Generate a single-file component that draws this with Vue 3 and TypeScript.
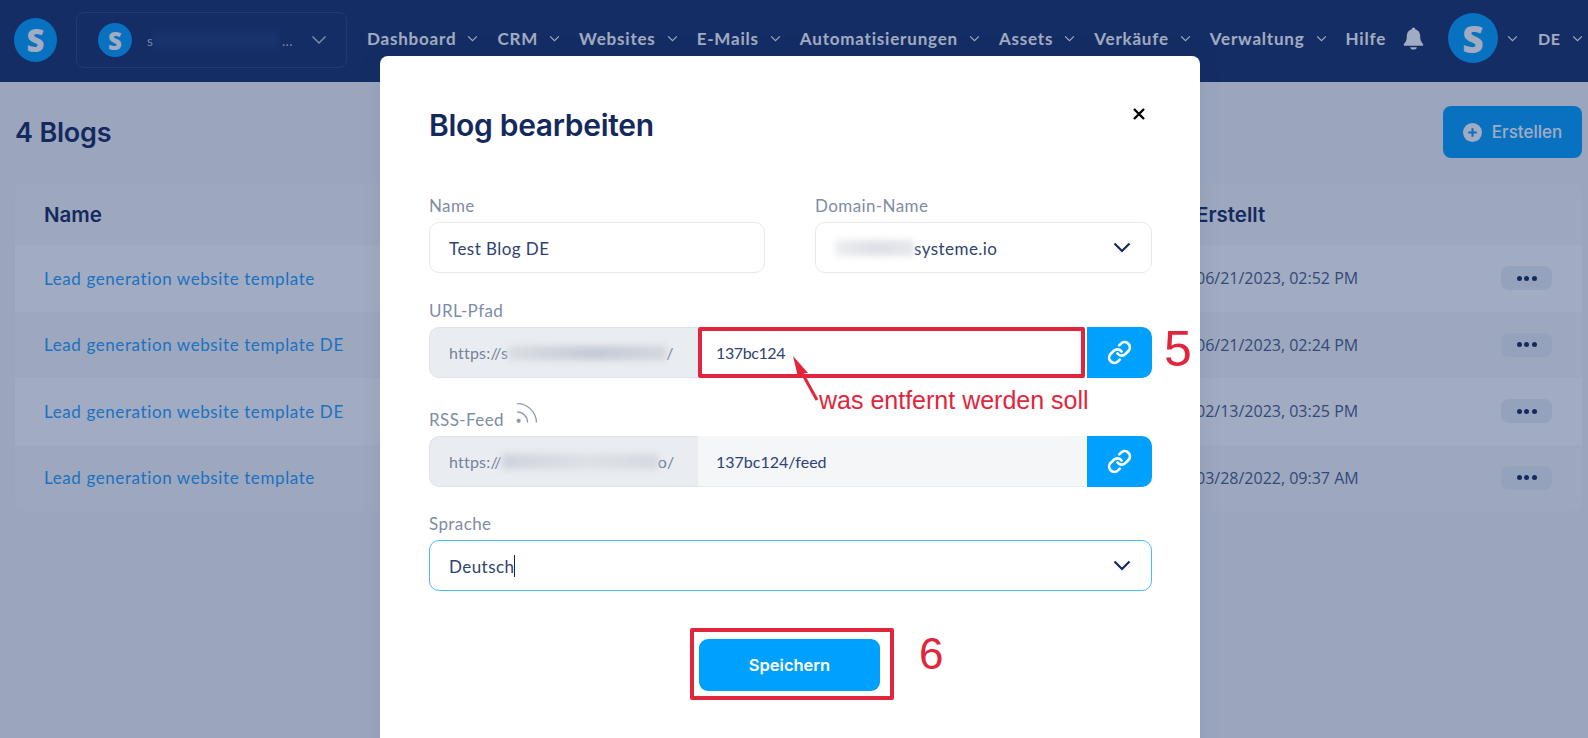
<template>
  <div class="page">
    <header class="topbar">
      <div class="logo logo-main">S</div>
      <div class="workspace">
        <div class="logo logo-small">S</div>
        <span class="workspace-name">s</span>
        <span class="blur blur-workspace"></span>
        <span class="workspace-name">…</span>
        <svg class="workspace-chevron" viewBox="0 0 16 10" fill="none"><path d="M1.500 1.500 8 8l6.500-6.500" stroke="currentColor" stroke-width="1.500" /></svg>
      </div>
      <nav class="nav">
        <a v-for="item in navItems" :key="item.label" class="nav-item">
          {{ item.label }}
          <svg v-if="item.menu" class="nav-chevron" viewBox="0 0 12 8" fill="none"><path d="M1 1.500 6 6.500l5-5" stroke="currentColor" stroke-width="1.300" /></svg>
        </a>
      </nav>
      <svg class="bell" viewBox="0 0 20 22"><path d="M10 0.500c-1 0-1.700.7-1.700 1.600C5.200 2.900 3.600 5.500 3.600 8.700c0 4.300-1.200 5.900-2.700 7.500-.6.700-.2 1.800.9 1.800h16.400c1.100 0 1.500-1.100.9-1.800-1.500-1.600-2.700-3.200-2.700-7.500 0-3.200-1.600-5.800-4.700-6.600C11.700 1.200 11 .5 10 .5Z" fill="currentColor" /><path d="M6.800 19.300h6.400c0 1.300-1.400 2.200-3.200 2.200s-3.200-.9-3.200-2.200Z" fill="currentColor" /></svg>
      <div class="logo logo-avatar">S</div>
      <svg class="nav-chevron avatar-chevron" viewBox="0 0 12 8" fill="none"><path d="M1 1.500 6 6.500l5-5" stroke="currentColor" stroke-width="1.300" /></svg>
      <span class="lang">DE</span>
      <svg class="nav-chevron lang-chevron" viewBox="0 0 12 8" fill="none"><path d="M1 1.500 6 6.500l5-5" stroke="currentColor" stroke-width="1.300" /></svg>
    </header>

    <main class="content">
      <div class="title-row">
        <h1>4 Blogs</h1>
        <button class="create-btn">
          <svg class="plus" viewBox="0 0 20 20"><circle cx="10" cy="10" r="10" fill="#fff" /><path d="M10 5.500v9M5.500 10h9" stroke="#00a0ff" stroke-width="2.200" /></svg>
          Erstellen
        </button>
      </div>
      <section class="table">
        <div class="table-row table-head">
          <span>Name</span>
          <span>Erstellt</span>
          <span></span>
        </div>
        <div v-for="(blog, i) in blogs" :key="i" class="table-row" :class="{ odd: i % 2 === 0 }">
          <a class="blog-link">{{ blog.name }}</a>
          <span class="blog-date">{{ blog.created }}</span>
          <button class="dots-btn"><i></i><i></i><i></i></button>
        </div>
      </section>
    </main>

    <div class="overlay">
      <div class="modal">
        <h2>Blog bearbeiten</h2>
        <svg class="close" viewBox="0 0 12 12" fill="none"><path d="M1 1l10 10M11 1 1 11" stroke="#000" stroke-width="2.400" /></svg>

        <div class="two-cols">
          <div>
            <label>Name</label>
            <div class="field">Test Blog DE</div>
          </div>
          <div>
            <label>Domain-Name</label>
            <div class="field">
              <span class="blur blur-domain"></span>systeme.io
              <svg class="select-chevron" viewBox="0 0 18 11" fill="none"><path d="M1.500 1.500 9 9l7.500-7.500" stroke="#14295c" stroke-width="2.200" /></svg>
            </div>
          </div>
        </div>

        <label class="url-label">URL-Pfad</label>
        <div class="url-row">
          <div class="url-prefix">https://s<span class="blur blur-url"></span>/</div>
          <div class="url-value marked">137bc124</div>
          <button class="link-btn">
            <svg viewBox="0 0 24 24" fill="none" stroke="#fff" stroke-width="2.600" stroke-linecap="round"><path d="M10 13a5 5 0 0 0 7.540.54l3-3a5 5 0 0 0-7.070-7.070l-1.720 1.710" /><path d="M14 11a5 5 0 0 0-7.540-.54l-3 3a5 5 0 0 0 7.070 7.070l1.710-1.710" /></svg>
          </button>
        </div>

        <label class="rss-label">
          RSS-Feed
          <svg class="rss" viewBox="0 0 22 22" fill="none" stroke="#8c98ae" stroke-width="1.200"><circle cx="3.500" cy="19" r="2" fill="#8c98ae" stroke="none" /><path d="M2 10.500c5.500 0 10 4.500 10 10" /><path d="M2 2.500c10 0 18.500 8 18.500 18" /></svg>
        </label>
        <div class="url-row">
          <div class="url-prefix">https://<span class="blur blur-rss"></span>o/</div>
          <div class="url-value">137bc124/feed</div>
          <button class="link-btn">
            <svg viewBox="0 0 24 24" fill="none" stroke="#fff" stroke-width="2.600" stroke-linecap="round"><path d="M10 13a5 5 0 0 0 7.540.54l3-3a5 5 0 0 0-7.070-7.070l-1.720 1.710" /><path d="M14 11a5 5 0 0 0-7.540-.54l-3 3a5 5 0 0 0 7.070 7.070l1.710-1.710" /></svg>
          </button>
        </div>

        <label class="lang-label">Sprache</label>
        <div class="field focused">
          Deutsch<span class="caret"></span>
          <svg class="select-chevron" viewBox="0 0 18 11" fill="none"><path d="M1.500 1.500 9 9l7.500-7.500" stroke="#14295c" stroke-width="2.200" /></svg>
        </div>

        <div class="save-row">
          <div class="save-mark">
            <button class="save-btn">Speichern</button>
          </div>
        </div>

        <!-- annotations drawn on top of the screenshot -->
        <span class="note-five">5</span>
        <span class="note-six">6</span>
        <span class="note-text">was entfernt werden soll</span>
        <svg class="note-arrow" viewBox="0 0 45 60" fill="none"><path d="M8 6 23 23l-5.500 .5L13 27Z" fill="#e1253d" /><path d="M17 23 32 50" stroke="#e1253d" stroke-width="3" /></svg>
      </div>
    </div>
  </div>
</template>

<script setup lang="ts">
interface NavItem {
  label: string
  menu: boolean
}

interface Blog {
  name: string
  created: string
}

const navItems: NavItem[] = [
  { label: 'Dashboard', menu: true },
  { label: 'CRM', menu: true },
  { label: 'Websites', menu: true },
  { label: 'E-Mails', menu: true },
  { label: 'Automatisierungen', menu: true },
  { label: 'Assets', menu: true },
  { label: 'Verkäufe', menu: true },
  { label: 'Verwaltung', menu: true },
  { label: 'Hilfe', menu: false }
]

const blogs: Blog[] = [
  { name: 'Lead generation website template', created: '06/21/2023, 02:52 PM' },
  { name: 'Lead generation website template DE', created: '06/21/2023, 02:24 PM' },
  { name: 'Lead generation website template DE', created: '02/13/2023, 03:25 PM' },
  { name: 'Lead generation website template', created: '03/28/2022, 09:37 AM' }
]
</script>

<style>
html,
body {
  margin: 0;
  overflow: hidden;
}
</style>

<style scoped>
.page {
  width: 1588px;
  height: 738px;
  position: relative;
  overflow: hidden;
  background: #f5f7fa;
  font-family: Lato, "Open Sans", sans-serif;
  color: #14295c;
}

.topbar {
  height: 82px;
  box-sizing: border-box;
  display: flex;
  align-items: center;
  padding: 0 0 4px 14px;
  background: #142d65;
  color: #fff;
}

.logo {
  flex: none;
  display: flex;
  align-items: center;
  justify-content: center;
  border-radius: 50%;
  background: #00a0ff;
  color: #fff;
  font-family: "Open Sans", sans-serif;
  font-weight: 800;
}

.logo-main {
  width: 43px;
  height: 44px;
  font-size: 31px;
  margin: 2px 19px 0 0;
}

.workspace {
  flex: none;
  width: 271px;
  height: 56px;
  box-sizing: border-box;
  display: flex;
  align-items: center;
  padding-left: 21px;
  margin-top: 2px;
  border: 1px solid #2b4478;
  border-radius: 8px;
}

.logo-small {
  width: 34px;
  height: 34px;
  font-size: 24px;
  margin: 0 15px 0 0;
}

.workspace-name {
  font-size: 14px;
  color: #fff;
  opacity: 0.7;
}

.blur {
  display: inline-block;
  flex: none;
  filter: blur(3px);
}

.blur-workspace {
  width: 126px;
  height: 18px;
  margin: 0 3px 0 0;
  background: #2b4a8a;
  opacity: 0.35;
}

.workspace-chevron {
  width: 16px;
  height: 10px;
  margin-left: 18px;
  color: #fff;
  opacity: 0.75;
}

.nav {
  display: flex;
  align-items: center;
  gap: 19px;
  margin-left: 20px;
  margin-top: -2px;
}

.nav-item {
  display: flex;
  align-items: center;
  font-size: 17px;
  font-weight: 700;
  letter-spacing: 0.8px;
  white-space: nowrap;
}

.nav-chevron {
  flex: none;
  width: 11px;
  height: 7px;
  margin-left: 11px;
}

.bell {
  width: 21px;
  height: 23px;
  flex: none;
  margin: -2px 0 0 17px;
}

.logo-avatar {
  width: 50px;
  height: 50px;
  font-size: 37px;
  margin: -2px 0 0 24px;
}

.avatar-chevron {
  margin: -2px 0 0 9px;
}

.lang {
  margin: -2px 0 0 20px;
  font-size: 16px;
  font-weight: 700;
  letter-spacing: 0.45px;
}

.lang-chevron {
  margin: -2px 0 0 12px;
}

.content {
  padding: 24px 6px 0 15px;
}

.title-row {
  display: flex;
  align-items: center;
  justify-content: space-between;
  height: 52px;
  margin-bottom: 25px;
}

h1 {
  margin: 0;
  font-family: Inter, sans-serif;
  font-size: 27px;
  font-weight: 600;
  color: #14295c;
  letter-spacing: -0.2px;
}

.create-btn {
  width: 139px;
  height: 52px;
  display: flex;
  align-items: center;
  justify-content: center;
  gap: 10px;
  border: none;
  border-radius: 8px;
  background: #00a0ff;
  color: #fff;
  font-family: Inter, sans-serif;
  font-size: 17px;
  font-weight: 500;
}

.plus {
  width: 19px;
  height: 19px;
}

.table {
  border-radius: 10px;
  overflow: hidden;
  background: #f8f9fb;
}

.table-row {
  height: 66.500px;
  display: grid;
  grid-template-columns: 1fr 305px 51px;
  align-items: center;
  padding: 0 30px 0 29px;
}

.table-head {
  height: 62px;
  font-family: Inter, sans-serif;
  font-size: 20.500px;
  font-weight: 600;
  color: #14295c;
}

.odd {
  background: #fff;
}

.blog-link {
  font-size: 17px;
  letter-spacing: 0.6px;
  color: #1fa0ff;
}

.blog-date {
  font-family: "Open Sans", sans-serif;
  font-size: 16px;
  color: #4a5d88;
}

.dots-btn {
  width: 51px;
  height: 24px;
  display: flex;
  align-items: center;
  justify-content: center;
  gap: 2.500px;
  padding: 0;
  border: none;
  border-radius: 8px;
  background: #ebf0f5;
}

.dots-btn i {
  width: 5px;
  height: 5px;
  border-radius: 50%;
  background: #14295c;
}

.overlay {
  position: absolute;
  inset: 0;
  display: flex;
  align-items: flex-start;
  padding-left: 380px;
  background: rgba(20, 45, 100, 0.4);
}

.modal {
  position: relative;
  width: 820px;
  height: 720px;
  flex: none;
  box-sizing: border-box;
  margin-top: 56px;
  padding: 48px 48px 0 49px;
  border-radius: 8px;
  background: #fff;
  box-shadow: 0 0 24px rgba(20, 45, 100, 0.08);
}

h2 {
  margin: 0 0 50px;
  height: 42px;
  line-height: 42px;
  font-family: Inter, sans-serif;
  font-size: 30px;
  font-weight: 600;
  letter-spacing: -0.3px;
  color: #14295c;
}

.close {
  position: absolute;
  top: 52px;
  right: 55px;
  width: 12px;
  height: 12px;
}

.two-cols {
  display: grid;
  grid-template-columns: 336px 337px;
  gap: 50px;
}

label {
  display: flex;
  align-items: center;
  height: 18px;
  margin-bottom: 8px;
  font-size: 17px;
  letter-spacing: 0.4px;
  color: #7f8ca5;
}

.url-label {
  margin-top: 28px;
}

.rss-label {
  margin-top: 32px;
}

.rss {
  width: 23px;
  height: 23px;
  margin: -13px 0 0 11px;
}

.lang-label {
  margin-top: 27px;
}

.field {
  position: relative;
  height: 51px;
  box-sizing: border-box;
  display: flex;
  align-items: center;
  padding: 1px 0 0 19px;
  border: 1px solid #e6e9ee;
  border-radius: 10px;
  font-size: 17px;
  letter-spacing: 0.45px;
  color: #2f4272;
}

.focused {
  border-color: #4dbbff;
}

.select-chevron {
  position: absolute;
  top: 19px;
  right: 20px;
  width: 18px;
  height: 11px;
}

.caret {
  width: 1px;
  height: 22px;
  background: #14295c;
}

.blur-domain {
  width: 79px;
  height: 16px;
  background: linear-gradient(90deg, #eceef1, #dde0e6 50%, #e4e7eb);
}

.url-row {
  display: grid;
  grid-template-columns: 269px 1fr 65px;
  height: 51px;
  font-size: 16px;
}

.url-prefix {
  display: flex;
  align-items: center;
  padding-left: 19px;
  letter-spacing: 0.2px;
  border: 1px solid #dfe3e9;
  border-right: none;
  border-radius: 10px 0 0 10px;
  background: #e9ecf0;
  color: #75829c;
}

.blur-url {
  width: 158px;
  height: 14px;
  background: linear-gradient(90deg, #d9dde3, #c4cad5 55%, #d3d7de);
}

.blur-rss {
  width: 156px;
  height: 15px;
  background: linear-gradient(90deg, #ced3dc, #dde0e6 55%, #d5d9e0);
}

.url-value {
  display: flex;
  align-items: center;
  padding-left: 18px;
  margin-right: 2px;
  background: #f4f6f8;
  border-bottom: 1px solid #e6e9ee;
  color: #2f4272;
}

.marked {
  box-sizing: border-box;
  background: #fff;
  border: 4px solid #e1253d;
  border-radius: 2px;
  padding-left: 14px;
  letter-spacing: -0.4px;
}

.link-btn {
  display: flex;
  align-items: center;
  justify-content: center;
  padding: 0;
  border: none;
  border-radius: 0 10px 10px 0;
  background: #00a0ff;
}

.link-btn svg {
  width: 25px;
  height: 25px;
}

.save-row {
  display: flex;
  margin-top: 37px;
  padding-left: 261px;
}

.save-mark {
  box-sizing: border-box;
  width: 204px;
  height: 72px;
  padding: 7px 10px 5px 5px;
  border: 4px solid #e1253d;
  border-radius: 2px;
}

.save-btn {
  width: 181px;
  height: 52px;
  border: none;
  border-radius: 9px;
  background: #00a0ff;
  color: #fff;
  font-family: Inter, sans-serif;
  font-size: 16.500px;
  font-weight: 600;
}

.note-five,
.note-six,
.note-text {
  position: absolute;
  font-family: "Liberation Sans", sans-serif;
  color: #e1253d;
  line-height: 1;
}

.note-five {
  left: 784px;
  top: 268px;
  font-size: 50px;
}

.note-six {
  left: 539px;
  top: 576px;
  font-size: 44px;
}

.note-text {
  left: 439px;
  top: 332px;
  font-size: 25px;
}

.note-arrow {
  position: absolute;
  left: 405px;
  top: 294px;
  width: 45px;
  height: 60px;
}
</style>
